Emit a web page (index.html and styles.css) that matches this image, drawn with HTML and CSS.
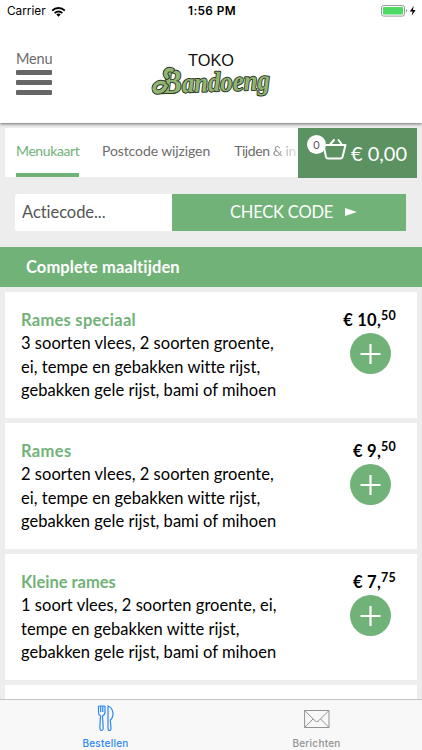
FILE: index.html
```html
<!DOCTYPE html>
<html lang="nl">
<head>
<meta charset="utf-8">
<title>Toko Bandoeng</title>
<link rel="stylesheet" href="styles.css">
</head>
<body>
<header class="top">
  <div class="status">
    <div class="carrier"><span>Carrier</span>
      <svg width="15" height="11" viewBox="0 0 15 11"><g fill="none" stroke="#000" stroke-width="2"><path d="M1.2 4.6A9 9 0 0 1 13.8 4.6"/><path d="M3.7 7.1A5.4 5.4 0 0 1 11.3 7.1"/></g><path d="M7.5 10.8L5.3 8.5A3.1 3.1 0 0 1 9.7 8.5Z"/></svg>
    </div>
    <div class="clock">1:56 PM</div>
    <div class="power">
      <svg width="36" height="12" viewBox="0 0 36 12"><rect x=".5" y=".5" width="23" height="10.6" rx="2.2" fill="#fff" stroke="#999"/><rect x="2" y="2" width="20" height="7.6" rx=".8" fill="#4cd964"/><path d="M25 4v3.6q1.3-.6 1.3-1.8T25 4Z" fill="#999"/><path d="M32.8.8L28.9 6.4H31.6L30.6 10.8L34.6 5H31.9Z"/></svg>
    </div>
  </div>
  <div class="brandbar">
    <div class="menu"><span>Menu</span><i></i><i></i><i></i></div>
    <svg class="logo" width="122" height="48" viewBox="0 0 122 48">
      <text class="toko" x="37" y="17" textLength="46" lengthAdjust="spacingAndGlyphs">TOKO</text>
      <g transform="rotate(-2 60 40)">
        <text class="script" x="11" y="42.500" textLength="108" lengthAdjust="spacingAndGlyphs"><tspan class="cap">B</tspan>andoeng</text>
      </g>
      <path class="swash-edge" d="M21 21C15 19 13 25 16 28M13 34C3 31 0 43 7 43Q12 43 15 37"/>
      <path class="swash" d="M21 21C15 19 13 25 16 28M13 34C3 31 0 43 7 43Q12 43 15 37"/>
    </svg>
  </div>
</header>
<main class="page">
  <nav class="tabs">
    <div class="links"><a class="active">Menukaart</a><a class="post">Postcode wijzigen</a><a class="times">Tijden <span class="fade">&amp; in</span></a></div>
    <div class="cart">
      <div class="basket">
        <svg width="28" height="24" viewBox="0 0 28 24" fill="none" stroke="#fff" stroke-width="2" stroke-linejoin="round" stroke-linecap="round"><path d="M2 8H25.500L22.500 20Q22 21.500 20.500 21.500H8Q6.500 21.500 6 20L3.500 8M10.500 7L14 3M21.500 7L18.500 3"/></svg>
        <span class="count">0</span>
      </div>
      <span class="total">€ 0,00</span>
    </div>
  </nav>
  <div class="promo"><div class="field">Actiecode...</div><div class="check"><span>CHECK CODE</span><svg width="12" height="8"><path d="M0 0L12 4L0 8Z" fill="#fff"/></svg></div></div>
  <h2>Complete maaltijden</h2>
  <section class="dishes">
    <article><div><h3 class="s1">Rames speciaal</h3><p>3 soorten vlees, 2 soorten groente,<br>ei, tempe en gebakken witte rijst,<br>gebakken gele rijst, bami of mihoen</p></div>
      <div class="buy"><div class="price">€ 10,<sup>50</sup></div><svg width="41" height="41"><circle cx="20.500" cy="20.500" r="20.500" fill="#71b278"/><path d="M10.500 21H30.500M20.500 11V31" stroke="#fff" stroke-width="2.200"/></svg></div></article>
    <article><div><h3 class="s2">Rames</h3><p>2 soorten vlees, 2 soorten groente,<br>ei, tempe en gebakken witte rijst,<br>gebakken gele rijst, bami of mihoen</p></div>
      <div class="buy"><div class="price">€ 9,<sup>50</sup></div><svg width="41" height="41"><circle cx="20.500" cy="20.500" r="20.500" fill="#71b278"/><path d="M10.500 21H30.500M20.500 11V31" stroke="#fff" stroke-width="2.200"/></svg></div></article>
    <article><div><h3>Kleine rames</h3><p>1 soort vlees, 2 soorten groente, ei,<br>tempe en gebakken witte rijst,<br>gebakken gele rijst, bami of mihoen</p></div>
      <div class="buy"><div class="price">€ 7,<sup>75</sup></div><svg width="41" height="41"><circle cx="20.500" cy="20.500" r="20.500" fill="#71b278"/><path d="M10.500 21H30.500M20.500 11V31" stroke="#fff" stroke-width="2.200"/></svg></div></article>
    <article></article>
  </section>
</main>
<footer class="bottom">
  <div class="item on"><svg width="18" height="27" viewBox="0 0 18 27" fill="none" stroke="#2b87f3" stroke-width="1.200"><path d="M1.500 1V7Q1.500 10 3.500 11L2.800 23Q3 25.500 4.500 25.500T6.200 23L5.500 11Q8 10 8 7V1M1.500 1H8M3.700 1V7M5.800 1V7M11 1V23Q11 25.500 12.500 25.500T14 23L13.300 15Q16 13 16 8Q15 2 11 1Z"/></svg><span>Bestellen</span></div>
  <div class="item"><svg width="26" height="27" viewBox="0 0 26 27" fill="none" stroke="#929292"><path d="M.6 5.500H25V22.500H.6ZM.6 5.500L11.300 16Q12.800 17.300 14.300 16L25 5.500M.6 22.500L9 14M25 22.500L16.600 14"/></svg><span>Berichten</span></div>
</footer>
</body>
</html>
```
FILE: styles.css
```css
* { box-sizing: border-box; }
body {
  margin: 0;
  width: 422px;
  height: 750px;
  overflow: hidden;
  display: flex;
  flex-direction: column;
  font-family: Lato, sans-serif;
  font-variant-ligatures: none;
  background: #ededed;
  color: #111;
}
svg { display: block; flex: none; }
.top {
  position: relative;
  height: 123px;
  flex: none;
  background: #fff;
  box-shadow: 0 1px 3px rgba(0, 0, 0, .55);
}
.status {
  height: 22px;
  padding: 0 5px 0 7px;
  display: grid;
  grid-template-columns: 1fr auto 1fr;
  align-items: center;
  font: 11.8px/22px Inter, sans-serif;
  color: #000;
}
.carrier { display: flex; align-items: center; gap: 5px; }
.clock { font-weight: 600; letter-spacing: .4px; }
.power { display: flex; justify-content: flex-end; }
.brandbar { display: flex; padding: 27px 0 0 16px; }
.menu {
  width: 36px;
  color: #6c6c6c;
  font-size: 14.5px;
  line-height: 20px;
  letter-spacing: -.2px;
}
.menu span { display: block; height: 20.500px; }
.menu i { display: block; height: 5px; background: #666; border-radius: 1px; margin-bottom: 5.300px; }
.logo { margin: 0 0 0 99px; overflow: visible; }
.toko { font: 17px "Liberation Sans", sans-serif; fill: #111; }
.script {
  font: italic bold 28px "Liberation Serif", serif;
  fill: #92b574;
  stroke: #2c3724;
  stroke-width: 2px;
  stroke-linejoin: round;
  paint-order: stroke;
}
.cap { font-size: 34px; }
.swash-edge, .swash { fill: none; stroke-linecap: round; stroke: #2c3724; stroke-width: 5.500px; }
.swash { stroke: #92b574; stroke-width: 3.700px; }
.page { flex: 1; min-height: 0; overflow: hidden; padding-top: 5px; }
.tabs { margin: 0 5px; height: 49px; display: flex; background: #fff; }
.links {
  flex: 1;
  display: flex;
  padding-left: 11px;
  font-size: 14px;
  line-height: 45px;
  white-space: nowrap;
  color: #6c6c6c;
}
.active { color: #71b278; border-bottom: 4px solid #71b278; width: 63px; letter-spacing: -.4px; }
.post { margin-left: 23px; letter-spacing: -.1px; }
.times { margin-left: 24px; letter-spacing: -.42px; }
.fade { background: linear-gradient(90deg, #888, #ddd); -webkit-background-clip: text; background-clip: text; color: transparent; }
.cart { width: 119px; height: 50px; background: #5c9161; display: flex; color: #fff; }
.basket { position: relative; width: 53px; padding: 9px 0 0 21.500px; }
.count {
  position: absolute;
  left: 9px;
  top: 7px;
  width: 19px;
  height: 19px;
  border-radius: 50%;
  background: #fff;
  color: #555;
  font-size: 11px;
  line-height: 19px;
  text-align: center;
}
.total { font-size: 20px; line-height: 50px; white-space: nowrap; }
.promo { display: flex; height: 37px; margin: 17px 16px 16px 15px; }
.field {
  width: 157px;
  background: #fff;
  border-radius: 3px 0 0 3px;
  padding-left: 7px;
  color: #555;
  font-size: 16.5px;
  line-height: 37px;
  letter-spacing: -.05px;
}
.check {
  flex: 1;
  background: #71b278;
  display: flex;
  align-items: center;
  padding-left: 58px;
  gap: 12px;
  color: #fff;
  font-size: 16.5px;
  letter-spacing: -.2px;
}
.check svg { margin-top: -2px; }
.check span { margin-top: -1px; }
h2 {
  margin: 0;
  height: 40px;
  padding-left: 26px;
  background: #71b278;
  color: #fff;
  font-size: 16.5px;
  line-height: 41px;
  letter-spacing: .1px;
}
.dishes { padding: 5px; display: flex; flex-direction: column; gap: 5px; }
article {
  height: 126px;
  flex: none;
  background: #fff;
  display: flex;
  justify-content: space-between;
  padding: 17px 21px 0 16px;
}
h3 { margin: 0; color: #71b278; font-size: 16.5px; line-height: 23px; }
.s1 { letter-spacing: .27px; }
.s2 { letter-spacing: .35px; }
p { margin: 0; font-size: 16.5px; line-height: 23.5px; color: #000; letter-spacing: .03px; white-space: nowrap; }
.buy { display: flex; flex-direction: column; align-items: flex-end; width: 60px; }
.buy svg { margin: 1px 5px 0 0; }
.price { font-size: 16.5px; font-weight: 700; line-height: 23px; height: 23px; white-space: nowrap; letter-spacing: .25px; color: #000; }
sup { font-size: 12.5px; line-height: 0; vertical-align: 6px; }
.bottom { height: 51px; flex: none; background: #f8f8f8; border-top: 1px solid #c4c4c4; display: flex; }
.item {
  flex: 1;
  display: flex;
  flex-direction: column;
  align-items: center;
  padding-top: 5px;
  font: 500 10px/12px Inter, sans-serif;
  letter-spacing: .25px;
  color: #929292;
}
.item span { margin-top: 4.500px; }
.on { color: #2b87f3; }
```
